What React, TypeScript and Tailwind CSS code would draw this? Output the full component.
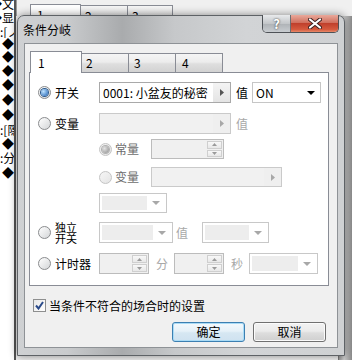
import React from "react";

function RightArrow({ c }: { c: string }) {
  return (
    <svg width="4" height="7" viewBox="0 0 4 7">
      <path d="M0 0L4 3.5L0 7Z" fill={c} />
    </svg>
  );
}
function DownArrow({ c }: { c: string }) {
  return (
    <svg width="8" height="4" viewBox="0 0 8 4">
      <path d="M0 0H8L4 4Z" fill={c} />
    </svg>
  );
}
function UpSmall({ c }: { c: string }) {
  return (
    <svg width="5" height="3" viewBox="0 0 5 3">
      <path d="M0 3H5L2.5 0Z" fill={c} />
    </svg>
  );
}
function DownSmall({ c }: { c: string }) {
  return (
    <svg width="5" height="3" viewBox="0 0 5 3">
      <path d="M0 0H5L2.5 3Z" fill={c} />
    </svg>
  );
}

function Radio({ checked = false, disabled = false }: { checked?: boolean; disabled?: boolean }) {
  return (
    <span
      className={`flex h-[13px] w-[13px] shrink-0 items-center justify-center rounded-full border ${
        disabled
          ? "border-[#c4c4c4] bg-[linear-gradient(135deg,#f6f6f6,#e4e4e4)]"
          : "border-[#8a8c8e] bg-[linear-gradient(135deg,#ffffff,#d4d6d8)]"
      }`}
    >
      {checked && (
        <span
          className={`h-[7px] w-[7px] rounded-full ${
            disabled
              ? "bg-[radial-gradient(circle_at_35%_35%,#e4e4e4,#8c8c8c)] shadow-[0_0_0_1px_#b0b0b0]"
              : "bg-[radial-gradient(circle_at_35%_35%,#bfe3ff,#1a5fb4)] shadow-[0_0_0_1px_#2d5a8c]"
          }`}
        />
      )}
    </span>
  );
}

function BoxBtn({ text, disabled = false, w }: { text?: string; disabled?: boolean; w: string }) {
  return (
    <div
      className={`flex h-full ${w} border ${
        disabled ? "border-[#cacaca] bg-[#f1f1f1]" : "border-[#a9a9a9] bg-white"
      }`}
    >
      <div className="flex flex-1 items-center overflow-hidden whitespace-nowrap pl-[3px] text-[12px] leading-none text-black">
        {text}
      </div>
      <div
        className={`flex w-[17px] items-center justify-center ${
          disabled ? "bg-[#efefef]" : "bg-[linear-gradient(#f4f4f4,#e4e4e4)]"
        }`}
      >
        <RightArrow c={disabled ? "#a8a8a8" : "#555555"} />
      </div>
    </div>
  );
}

function Drop({ w, value, disabled = false }: { w: string; value?: string; disabled?: boolean }) {
  if (!disabled) {
    return (
      <div className={`flex h-full ${w} items-center border border-[#c6c6c6] bg-white`}>
        <div className="flex-1 pl-[3px] text-[12px] leading-none text-black">{value}</div>
        <div className="flex w-[16px] items-center justify-center pr-[3px]">
          <DownArrow c="#000000" />
        </div>
      </div>
    );
  }
  return (
    <div className={`flex h-full ${w} items-stretch border border-[#c8c8c8] bg-white p-[2px]`}>
      <div className="flex-1 bg-[#ededed]" />
      <div className="flex w-[17px] items-center justify-center">
        <DownArrow c="#a8a8a8" />
      </div>
    </div>
  );
}

function Spin({ w }: { w: string }) {
  return (
    <div className={`flex h-full ${w} border border-[#bcbcbc] bg-[#f0f0f0] p-px`}>
      <div className="flex-1" />
      <div className="flex w-[15px] flex-col gap-px">
        <div className="flex flex-1 items-center justify-center border border-[#cfcfcf] bg-[linear-gradient(#f8f8f8,#e8e8e8)]">
          <UpSmall c="#9a9a9a" />
        </div>
        <div className="flex flex-1 items-center justify-center border border-[#cfcfcf] bg-[linear-gradient(#f8f8f8,#e8e8e8)]">
          <DownSmall c="#9a9a9a" />
        </div>
      </div>
    </div>
  );
}

const bgLines: { t: string; h: string; left?: boolean; blue?: boolean }[] = [
  { t: "互", h: "h-[5px]", blue: true },
  { t: "◆文", h: "h-[14px]" },
  { t: "◆显", h: "h-[14px]" },
  { t: ":[ノ", h: "h-[13px]", left: true },
  { t: "◆", h: "h-[12px]" },
  { t: "◆", h: "h-[14px]" },
  { t: "◆", h: "h-[14px]" },
  { t: "◆", h: "h-[14px]" },
  { t: "◆", h: "h-[15px]" },
  { t: "◆", h: "h-[15px]" },
  { t: ":[隠", h: "h-[15px]", left: true },
  { t: "◆", h: "h-[14px]" },
  { t: ":分", h: "h-[14px]", left: true },
  { t: "◆", h: "h-[15px]" },
];

export default function App() {
  return (
    <div className="relative h-[360px] w-[352px] overflow-hidden bg-[#e6e6e6] font-['Noto_Sans_CJK_SC','Liberation_Sans',sans-serif]">
      {/* background application */}
      <div className="flex h-full">
        <div className="flex w-[16px] flex-col overflow-hidden border-r-2 border-[#555555] bg-white">
          <div className="-mt-[8px] flex flex-col">
            {bgLines.map((l, i) => (
              <div
                key={i}
                className={`${l.h} flex items-center overflow-hidden whitespace-nowrap text-[12px] leading-none ${
                  l.left ? "justify-start" : "justify-end"
                } ${l.blue ? "text-[#2030c0]" : "text-black"}`}
              >
                {l.t}
              </div>
            ))}
          </div>
        </div>
        <div className="flex flex-1 flex-col bg-[#f0f0f0]">
          <div className="flex h-[16px] items-end overflow-hidden border-l border-[#9a9a9a] pl-[13px]">
            <div className="flex h-[12px] w-[51px] overflow-hidden border border-b-0 border-[#898c95] bg-white pl-[6px] pt-[4px] text-[12px] leading-none">1</div>
            <div className="flex h-[11px] w-[47px] overflow-hidden border border-b-0 border-l-0 border-[#898c95] bg-[linear-gradient(#f6f6f6,#e4e4e4)] pl-[4px] pt-[4px] text-[12px] leading-none">2</div>
            <div className="flex h-[11px] w-[45px] overflow-hidden border border-b-0 border-l-0 border-[#898c95] bg-[linear-gradient(#f6f6f6,#e4e4e4)] pl-[4px] pt-[4px] text-[12px] leading-none">3</div>
          </div>
          <div className="flex flex-1 justify-end">
            <div className="w-[14px] border-l border-[#777777] bg-[linear-gradient(90deg,#9a9a9a,#cfcfcf_40%,#8a8a8a)]" />
          </div>
        </div>
      </div>

      {/* dialog window */}
      <div className="absolute left-[17px] top-[15px] flex h-[341px] w-[328px] flex-col rounded-t-[7px] border border-[#5e6266] bg-[linear-gradient(90deg,#cfd1d3_0%,#c9cbcd_15%,#a9abad_32%,#c6c8ca_48%,#d2d4d6_70%,#cfd1d3_100%)] shadow-[0_0_8px_rgba(0,0,0,0.45)]">
        {/* title bar */}
        <div className="flex h-[27px] items-start">
          <div className="flex h-full flex-1 items-center pl-[5px] text-[12px] leading-none text-black">条件分岐</div>
          <div className="mr-[5px] -mt-px flex h-[18px] overflow-hidden rounded-b-[5px] border border-t-0 border-[#4e5257]">
            <div className="flex w-[28px] items-center justify-center border-r border-[#6a6e72] bg-[linear-gradient(#e8eaec,#c3c6c9_50%,#aeb2b6_51%,#c8ccd0)] text-[13px] font-bold leading-none text-white [text-shadow:0_0_2px_#222]">
              ?
            </div>
            <div className="flex w-[47px] items-center justify-center bg-[linear-gradient(#e9a99b,#d0705e_45%,#c0402c_50%,#d55a3e_85%,#e88a6a)]">
              <svg width="14" height="11" viewBox="0 0 14 11">
                <path d="M2 1.5L12 9.5M12 1.5L2 9.5" stroke="#3a2020" strokeWidth="4" strokeLinecap="round" />
                <path d="M2 1.5L12 9.5M12 1.5L2 9.5" stroke="#ffffff" strokeWidth="2.2" strokeLinecap="round" />
              </svg>
            </div>
          </div>
        </div>

        {/* client area */}
        <div className="mx-[6px] flex h-[305px] flex-col border border-[#8e9296] bg-[#f0f0f0]">
          <div className="ml-[5px] mt-[6px] flex w-[300px] flex-col">
            {/* tabs */}
            <div className="relative z-10 flex h-[22px] items-end">
              <div className="-mb-px flex h-[22px] w-[52px] items-center border border-b-0 border-[#898c95] bg-white pl-[7px] text-[12px] leading-none text-black">
                1
              </div>
              <div className="flex h-[19px] w-[47px] items-center border border-b-0 border-l-0 border-[#898c95] bg-[linear-gradient(#f5f5f5,#ececec_45%,#dedede_55%,#d2d2d2)] pl-[4px] text-[12px] leading-none text-black">
                2
              </div>
              <div className="flex h-[19px] w-[47px] items-center border border-b-0 border-l-0 border-[#898c95] bg-[linear-gradient(#f5f5f5,#ececec_45%,#dedede_55%,#d2d2d2)] pl-[5px] text-[12px] leading-none text-black">
                3
              </div>
              <div className="flex h-[19px] w-[47px] items-center border border-b-0 border-l-0 border-[#898c95] bg-[linear-gradient(#f5f5f5,#ececec_45%,#dedede_55%,#d2d2d2)] pl-[6px] text-[12px] leading-none text-black">
                4
              </div>
            </div>
            {/* panel */}
            <div className="-ml-px flex h-[214px] w-[300px] flex-col border border-[#898c95] bg-white pt-[9px] text-[12px] leading-none">
              {/* row 1 */}
              <div className="flex h-[21px] items-center">
                <div className="flex w-[69px] items-center gap-[4px] pl-[8px]">
                  <Radio checked />
                  <span className="text-black">开关</span>
                </div>
                <BoxBtn w="w-[132px]" text="0001: 小盆友的秘密" />
                <span className="ml-[5px] w-[16px] text-black">值</span>
                <Drop w="w-[69px]" value="ON" />
              </div>
              {/* row 2 */}
              <div className="mt-[10px] flex h-[21px] items-center">
                <div className="flex w-[69px] items-center gap-[4px] pl-[8px]">
                  <Radio />
                  <span className="text-black">变量</span>
                </div>
                <BoxBtn w="w-[132px]" disabled />
                <span className="ml-[5px] text-[#a8a8a8]">值</span>
              </div>
              {/* row 3 */}
              <div className="mt-[5px] flex h-[20px] items-center pl-[69px]">
                <div className="flex w-[52px] items-center gap-[3px]">
                  <Radio checked disabled />
                  <span className="text-[#6d6d6d]">常量</span>
                </div>
                <Spin w="w-[73px]" />
              </div>
              {/* row 4 */}
              <div className="mt-[8px] flex h-[20px] items-center pl-[69px]">
                <div className="flex w-[52px] items-center gap-[3px]">
                  <Radio disabled />
                  <span className="text-[#6d6d6d]">变量</span>
                </div>
                <BoxBtn w="w-[131px]" disabled />
              </div>
              {/* row 5 */}
              <div className="mt-[6px] flex h-[20px] items-center pl-[69px]">
                <Drop w="w-[68px]" disabled />
              </div>
              {/* row 6 */}
              <div className="mt-[9px] flex h-[21px] items-center">
                <div className="flex w-[69px] items-center gap-[4px] pl-[8px]">
                  <Radio />
                  <span className="flex flex-col text-[11px] leading-[11px] text-black">
                    <span>独立</span>
                    <span>开关</span>
                  </span>
                </div>
                <Drop w="w-[74px]" disabled />
                <span className="ml-[3px] w-[26px] text-[#a8a8a8]">值</span>
                <Drop w="w-[67px]" disabled />
              </div>
              {/* row 7 */}
              <div className="mt-[10px] flex h-[21px] items-center">
                <div className="flex w-[69px] items-center gap-[4px] pl-[8px]">
                  <Radio />
                  <span className="text-black">计时器</span>
                </div>
                <Spin w="w-[50px]" />
                <span className="ml-[7px] w-[18px] text-[#a8a8a8]">分</span>
                <Spin w="w-[50px]" />
                <span className="ml-[7px] w-[18px] text-[#a8a8a8]">秒</span>
                <Drop w="w-[69px]" disabled />
              </div>
            </div>
          </div>

          {/* checkbox */}
          <div className="ml-[8px] mt-[13px] flex h-[13px] items-center gap-[3px]">
            <span className="flex h-[13px] w-[13px] items-center justify-center border border-[#8e8f8f] bg-[linear-gradient(135deg,#e8e8e8,#ffffff)] p-px">
              <svg width="9" height="9" viewBox="0 0 9 9">
                <path d="M1 4.5L3.5 7.5L8 1" stroke="#2a4a8a" strokeWidth="2" fill="none" />
              </svg>
            </span>
            <span className="text-[12px] leading-none text-black">当条件不符合的场合时的设置</span>
          </div>

          {/* buttons */}
          <div className="mr-[11px] mt-[10px] flex justify-end gap-[8px]">
            <div className="flex h-[20px] w-[73px] items-center justify-center rounded-[3px] border border-[#3c7fb1] bg-[linear-gradient(#f4f9fc,#e6f1f8_45%,#d6e7f2_55%,#cfe2f0)] text-[12px] leading-none text-black shadow-[inset_0_0_0_1px_#a9dbf6]">
              确定
            </div>
            <div className="flex h-[20px] w-[73px] items-center justify-center rounded-[3px] border border-[#707070] bg-[linear-gradient(#f2f2f2,#ebebeb_45%,#dddddd_55%,#cfcfcf)] text-[12px] leading-none text-black shadow-[inset_0_0_0_1px_#fbfbfb]">
              取消
            </div>
          </div>
        </div>
      </div>
    </div>
  );
}
